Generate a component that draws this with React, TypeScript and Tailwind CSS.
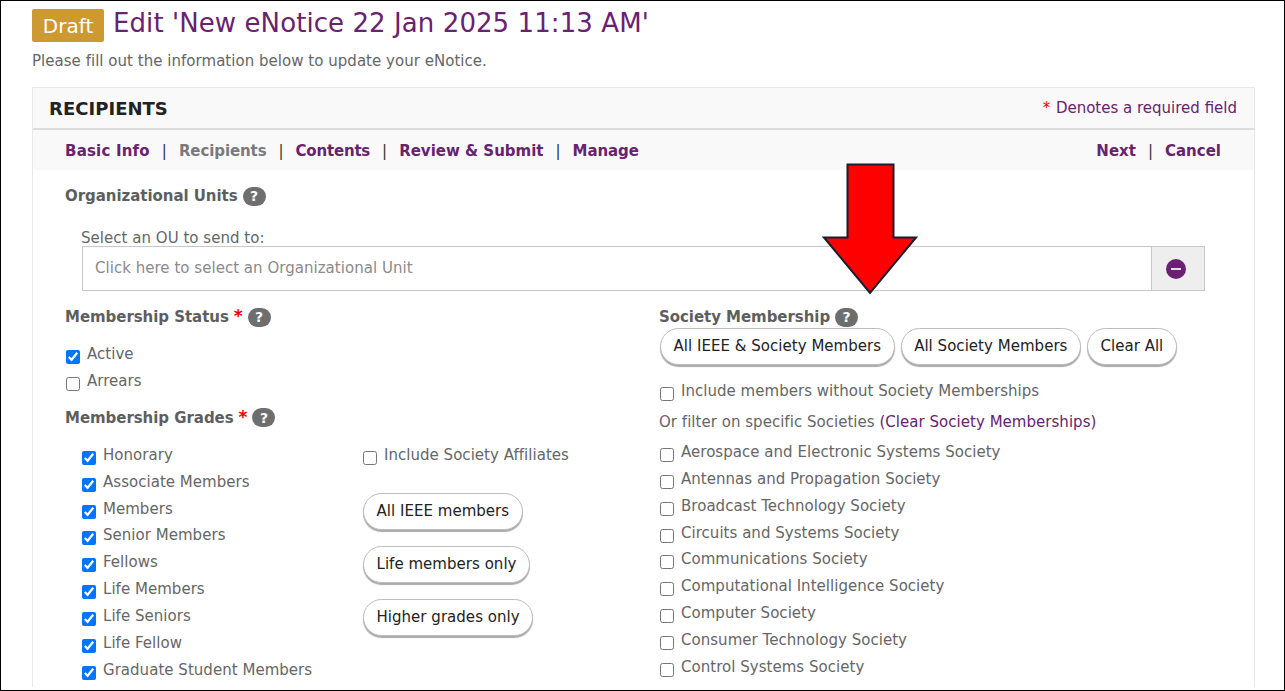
const purple = "text-[#68226f]";

function Help() {
  return (
    <span className="ml-[5px] inline-flex h-[19px] w-[23px] items-center justify-center rounded-full bg-[#6e6e6e] text-[14px] font-bold leading-none text-white">
      ?
    </span>
  );
}

function Req() {
  return <span className="ml-[5px] text-[17px] text-[#f00000]">*</span>;
}

function SectionLabel({ text, required }: { text: string; required?: boolean }) {
  return (
    <div className="flex h-[20px] items-center text-[15px] font-bold tracking-[-0.05px] text-[#5e5e5e]">
      <span>{text}</span>
      {required && <Req />}
      <Help />
    </div>
  );
}

function Check({ label, checked }: { label: string; checked?: boolean }) {
  return (
    <label className="flex h-[26.9px] items-start text-[15px] leading-[20px] text-[#666]">
      <input
        type="checkbox"
        defaultChecked={checked}
        className="mt-[6px] mr-[7px] ml-[1px] h-[14px] w-[14px] shrink-0 accent-[#0075ff]"
      />
      <span>{label}</span>
    </label>
  );
}

function Pill({ label }: { label: string }) {
  return (
    <button className="h-[37px] rounded-[19px] border border-[#bdbdbd] bg-white px-[12.5px] text-[15px] whitespace-nowrap text-[#222] shadow-[0_2px_1px_#aaa]">
      {label}
    </button>
  );
}

function NavLink({ label, muted, className }: { label: string; muted?: boolean; className?: string }) {
  return <span className={`${muted ? "text-[#7a7a7a]" : purple} ${className ?? ""}`}>{label}</span>;
}

function Sep() {
  return <span className="font-normal text-[#333]">|</span>;
}

const grades = [
  "Honorary",
  "Associate Members",
  "Members",
  "Senior Members",
  "Fellows",
  "Life Members",
  "Life Seniors",
  "Life Fellow",
  "Graduate Student Members",
];

const societies = [
  "Aerospace and Electronic Systems Society",
  "Antennas and Propagation Society",
  "Broadcast Technology Society",
  "Circuits and Systems Society",
  "Communications Society",
  "Computational Intelligence Society",
  "Computer Society",
  "Consumer Technology Society",
  "Control Systems Society",
];

export default function App() {
  return (
    <div className="relative h-[691px] w-[1285px] overflow-hidden border border-black bg-white font-['DejaVu_Sans',sans-serif] tracking-[0.03px]">
      <div className="pt-[8px] pr-[29px] pl-[31px]">
        <div className="flex items-center">
          <span className="flex h-[33px] w-[72px] items-center justify-center rounded-[2px] bg-[#cc9933] text-[20px] text-white">
            Draft
          </span>
          <h1 className={`ml-[9px] pb-[4px] text-[26px] leading-[29px] tracking-[0.08px] whitespace-nowrap ${purple}`}>
            Edit 'New eNotice 22 Jan 2025 11:13 AM'
          </h1>
        </div>
        <p className="mt-[9px] h-[20px] text-[15px] leading-[20px] text-[#666]">
          Please fill out the information below to update your eNotice.
        </p>

        <section className="mt-[16px] border border-b-0 border-[#e8e8e8]">
          <div className="flex h-[42px] items-center justify-between border-b-2 border-[#dcdcdc] bg-[#f9f9f9] pr-[17px] pl-[16px]">
            <h2 className="text-[18px] font-bold text-[#222]">RECIPIENTS</h2>
            <span className={`text-[15px] tracking-normal ${purple}`}>
              <span className="mr-[1px] text-[#f00000]">*</span> Denotes a required field
            </span>
          </div>
          <div className="flex h-[40px] items-center justify-between bg-[#f9f9f9] pt-[2px] pr-[33px] pl-[32px] text-[15px] font-bold tracking-normal">
            <div className="flex gap-[12px]">
              <NavLink label="Basic Info" className="tracking-[0.2px]" />
              <Sep />
              <NavLink label="Recipients" muted className="tracking-[-0.1px]" />
              <Sep />
              <NavLink label="Contents" className="tracking-[-0.2px]" />
              <Sep />
              <NavLink label="Review & Submit" />
              <Sep />
              <NavLink label="Manage" className="tracking-[-0.1px]" />
            </div>
            <div className="flex gap-[12px]">
              <NavLink label="Next" />
              <Sep />
              <NavLink label="Cancel" />
            </div>
          </div>

          <div className="pr-[49px] pl-[32px]">
            <div className="mt-[16px]">
              <SectionLabel text="Organizational Units" />
            </div>
            <div className="mt-[22px] h-[18px] pl-[16px] text-[15px] leading-[20px] text-[#666]">
              Select an OU to send to:
            </div>
            <div className="ml-[17px] flex h-[45px] border border-[#c8c8c8]">
              <div className="flex flex-1 items-center pl-[12px] text-[15px] text-[#8a8a8a]">
                Click here to select an Organizational Unit
              </div>
              <div className="flex w-[53px] items-center justify-center border-l border-[#c8c8c8] bg-[#eee] pr-[4px]">
                <span className="flex h-[20px] w-[20px] items-center justify-center rounded-full bg-[#68226f]">
                  <span className="h-[2px] w-[10px] bg-[#e8d8ea]" />
                </span>
              </div>
            </div>

            <div className="mt-[16px] grid grid-cols-[594px_1fr]">
              <div>
                <SectionLabel text="Membership Status" required />
                <div className="mt-[17px]">
                  <Check label="Active" checked />
                  <Check label="Arrears" />
                </div>
                <div className="mt-[10px]">
                  <SectionLabel text="Membership Grades" required />
                </div>
                <div className="mt-[17px] flex">
                  <div className="w-[297px] pl-[16px]">
                    {grades.map((g) => (
                      <Check key={g} label={g} checked />
                    ))}
                  </div>
                  <div className="flex flex-col items-start">
                    <Check label="Include Society Affiliates" />
                    <div className="mt-[21px] flex flex-col items-start gap-[16px] pl-[1px]">
                      <Pill label="All IEEE members" />
                      <Pill label="Life members only" />
                      <Pill label="Higher grades only" />
                    </div>
                  </div>
                </div>
              </div>
              <div>
                <SectionLabel text="Society Membership" />
                <div className="mt-[1px] flex gap-[6px] pl-[1px]">
                  <Pill label="All IEEE & Society Members" />
                  <Pill label="All Society Members" />
                  <Pill label="Clear All" />
                </div>
                <div className="mt-[16px]">
                  <Check label="Include members without Society Memberships" />
                </div>
                <p className="mt-[4px] mb-[10px] h-[20px] text-[15px] leading-[20px] text-[#666]">
                  Or filter on specific Societies <span className={purple}>(Clear Society Memberships)</span>
                </p>
                {societies.map((s) => (
                  <Check key={s} label={s} />
                ))}
              </div>
            </div>
          </div>
        </section>
      </div>

      <svg className="absolute top-[162px] left-[821px]" width="96" height="132" viewBox="0 0 96 132">
        <path d="M25.5 1.5H71.5V74.5H94L48 130L2 74.5H25.5Z" fill="#ff0000" stroke="#16202c" strokeWidth="2" />
      </svg>
    </div>
  );
}
